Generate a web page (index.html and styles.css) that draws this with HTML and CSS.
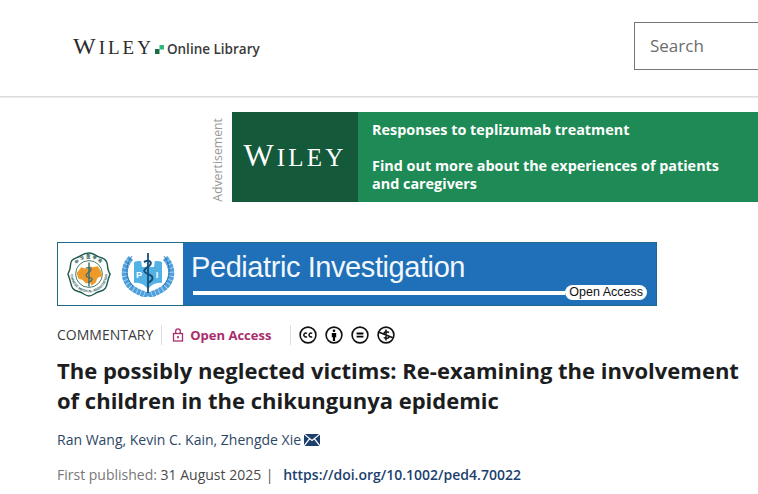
FILE: index.html
```html
<!DOCTYPE html>
<html lang="en">
<head>
    <meta charset="UTF-8">
    <title>The possibly neglected victims - Wiley Online Library</title>
    <link rel="stylesheet" href="styles.css">
</head>
<body>
    <header class="site-header">
        <div class="logo">
            <span class="logo-wiley"><span class="logo-cap">W</span>ILEY</span>
            <svg class="logo-mark" width="9" height="9" viewBox="0 0 9 9"><rect x="0" y="4" width="4.5" height="5" fill="#1a6b45"/><rect x="4.5" y="0" width="4.5" height="4.5" fill="#2fb67a"/></svg>
            <span class="logo-text">Online Library</span>
        </div>
        <div class="search">Search</div>
    </header>

    <div class="ad-row">
        <div class="ad-label"><span>Advertisement</span></div>
        <div class="ad">
            <div class="ad-logo"><span class="ad-cap">W</span>ILEY</div>
            <div class="ad-text">
                <p>Responses to teplizumab treatment</p>
                <p>Find out more about the experiences of patients and caregivers</p>
            </div>
        </div>
    </div>

    <main class="article">
        <div class="banner">
            <div class="banner-logos">
                <svg width="44" height="46" viewBox="0 0 46 46">
                    <path id="ring-top" d="M6.500 23a16.500 16.500 0 0 1 33 0" fill="none"/>
                    <path id="ring-bottom" d="M3.800 23a19.200 19.200 0 0 0 38.400 0" fill="none"/>
                    <path d="M23 1c4 0 6 2 9 3.500s7 1.500 9 5 1 6 2 9 2 4.500 2 4.500-1 3-2 6-1 6-3 9-6 3-9 4.500-5 3.500-8 3.500-5-2-8-3.500-7-1.500-9-4.500-2-6-3-9-2-6-2-6 1-2 2-5 0-6.500 2-9 6-3 9-5S19 1 23 1z" fill="#fff" stroke="#1f5a50" stroke-width="1.500"/>
                    <circle cx="23" cy="23" r="14" fill="#fffdf6" stroke="#2a6a5e" stroke-width=".9"/>
                    <path d="M10 22l5-6 6 2 2-3 4 1 5-1 3 4 2 6-5 2-2 5-4 3-2-3-4 1-4-4-4-1z" fill="#ee9a2b"/>
                    <path d="M23 11v25" fill="none" stroke="#3a6f73" stroke-width="1.500"/>
                    <path d="M19.500 17c5-2 8 1 3.500 4s-4 5 1 6 1 4-2 5" fill="none" stroke="#3a6f73" stroke-width="1.300"/>
                    <text class="ring-cjk"><textPath href="#ring-top" startOffset="50%">中华医学会</textPath></text>
                    <text class="ring-text"><textPath href="#ring-bottom" startOffset="50%">CHINESE MEDICAL ASSOCIATION</textPath></text>
                </svg>
                <svg width="54" height="46" viewBox="0 0 54 46">
                    <path d="M10 7C2 15 1 29 11 37c5 4 10 5 16 8" fill="none" stroke="#4e9fdc" stroke-width="6" stroke-dasharray="3.500 .5"/>
                    <path d="M44 7c8 8 9 22-1 30-5 4-10 5-16 8" fill="none" stroke="#4e9fdc" stroke-width="6" stroke-dasharray="3.500 .5"/>
                    <path d="M11 5C4 14 4 27 12 35M43 5c7 9 7 22-1 30" fill="none" stroke="#1f6aa8" stroke-width=".8"/>
                    <path d="M13 11c5-2 10-1 14 3 4-4 9-5 14-3v21c-5-1-10 1-14 6-4-5-9-7-14-6z" fill="#52b2e6"/>
                    <path d="M20 9l7 5 7-5-1 7H21z" fill="#fff"/>
                    <path d="M27 2v40" fill="none" stroke="#174f7a" stroke-width="1.800"/>
                    <path d="M23 11c6-3 9 1 5 4s-8 5-1 8 5 6 0 9" fill="none" stroke="#174f7a" stroke-width="2"/>
                    <text class="book-letter" x="18" y="27">P</text>
                    <text class="book-letter" x="36" y="27">I</text>
                </svg>
            </div>
            <div class="banner-main">
                <div class="banner-title">Pediatric Investigation</div>
                <div class="banner-rule">
                    <span class="banner-line"></span>
                    <span class="banner-pill">Open Access</span>
                </div>
            </div>
        </div>

        <div class="meta">
            <span class="meta-type">COMMENTARY</span>
            <span class="meta-access">
                <svg width="12" height="14" viewBox="0 0 12 14"><rect x="1.500" y="5.500" width="9" height="7.500" fill="none" stroke="#a92d6c" stroke-width="1.300"/><path d="M3.700 5.500V3.200a2.300 2.300 0 0 1 4.600 0v2.300" fill="none" stroke="#a92d6c" stroke-width="1.300"/><rect x="5.200" y="8" width="1.600" height="2.400" fill="#a92d6c"/></svg>
                Open Access
            </span>
            <span class="meta-cc">
                <svg width="18" height="18" viewBox="0 0 18 18"><circle cx="9" cy="9" r="7.900" class="cc-ring"/><path d="M8 7.400a2 2 0 1 0 0 3.200M13.200 7.400a2 2 0 1 0 0 3.200" class="cc-line"/></svg>
                <svg width="18" height="18" viewBox="0 0 18 18"><circle cx="9" cy="9" r="7.900" class="cc-ring"/><circle cx="9" cy="4.800" r="1.300"/><path d="M6.800 7h4.400v4.200h-1.100V15H7.900v-3.800H6.800z"/></svg>
                <svg width="18" height="18" viewBox="0 0 18 18"><circle cx="9" cy="9" r="7.900" class="cc-ring"/><path d="M5.600 6.600h6.800v1.800H5.600zM5.600 9.800h6.800v1.800H5.600z"/></svg>
                <svg width="18" height="18" viewBox="0 0 18 18"><circle cx="9" cy="9" r="7.900" class="cc-ring"/><path d="M2.200 6.200l13.600 5.600M12 6.600c-1.600-1.400-5-1.200-5 .9 0 2.300 5 1 5 3.200 0 2-3.500 2.200-5.200.8M9 3.500v11" class="cc-line"/></svg>
            </span>
        </div>

        <h1 class="title">The possibly neglected victims: Re-examining the involvement of children in the chikungunya epidemic</h1>

        <div class="authors">
            Ran Wang, Kevin C. Kain, Zhengde Xie
            <svg width="16" height="12" viewBox="0 0 17 12" preserveAspectRatio="none"><rect width="17" height="12" fill="#1c3f6e"/><path d="M0 0l8.500 6.500L17 0M0 12l6.200-7.500M17 12l-6.200-7.500" fill="none" stroke="#fff" stroke-width="1.200"/></svg>
        </div>

        <div class="published">
            First published: <span class="published-date">31 August 2025</span>
            <span class="published-sep">|</span>
            <a class="doi">https://doi.org/10.1002/ped4.70022</a>
        </div>
    </main>
</body>
</html>
```

FILE: styles.css
```css
* {
    box-sizing: border-box;
    margin: 0;
    padding: 0;
}

html, body {
    width: 758px;
    height: 494px;
    overflow: hidden;
}

body {
    background: #fff;
    font-family: 'Open Sans', sans-serif;
    color: #1c1d1e;
}

.site-header {
    height: 97px;
    border-bottom: 1px solid #dcdcdc;
    box-shadow: 0 1px 1px #eee;
    display: flex;
    align-items: flex-start;
    justify-content: space-between;
    padding: 22px 0 0 73px;
}

.logo {
    display: flex;
    align-items: baseline;
    margin-top: 11px;
}

.logo-wiley {
    font-family: 'Liberation Serif', serif;
    font-size: 19px;
    letter-spacing: 3px;
    color: #2b2b2b;
}

.logo-cap {
    font-size: 24px;
}

.logo-mark {
    margin: 0 3px 0 1px;
}

.logo-text {
    font-family: 'Open Sans', sans-serif;
    font-size: 13.500px;
    font-weight: 600;
    color: #3a3a3a;
}

.search {
    width: 130px;
    margin-right: -6px;
    height: 48px;
    border: 1px solid #767676;
    padding: 0 15px;
    font-size: 17px;
    line-height: 45px;
    color: #6c6c6c;
}

.ad-row {
    display: flex;
    height: 90px;
    margin: 15px 0 0 209px;
}

.ad-label {
    width: 23px;
    display: flex;
    align-items: flex-end;
}

.ad-label span {
    writing-mode: vertical-rl;
    transform: rotate(180deg);
    font-size: 12.300px;
    color: #999;
}

.ad {
    display: flex;
    width: 526px;
    background: #1e8a55;
}

.ad-logo {
    width: 126px;
    background: #14593a;
    color: #fff;
    font-family: 'Liberation Serif', serif;
    font-size: 25px;
    letter-spacing: 3.200px;
    text-align: center;
    line-height: 86px;
}

.ad-cap {
    font-size: 32px;
}

.ad-text {
    flex: 1;
    padding: 9px 30px 0 14px;
    color: #fff;
    font-size: 14.400px;
    font-weight: 700;
    line-height: 18px;
}

.ad-text p + p {
    margin-top: 18px;
}

.article {
    padding: 40px 0 0 57px;
}

.banner {
    display: flex;
    width: 600px;
    height: 64px;
    background: #1f6fb9;
    border: 1px solid #1d6a8a;
}

.banner-logos {
    width: 125px;
    background: #fff;
    display: flex;
    align-items: center;
    gap: 10px;
    padding-left: 9px;
}

.ring-cjk {
    font-family: 'Noto Sans CJK SC', sans-serif;
    font-size: 4.500px;
    font-weight: 700;
    letter-spacing: 1.500px;
    text-anchor: middle;
    fill: #1f5a50;
}

.ring-text {
    font-family: 'Liberation Sans', sans-serif;
    font-size: 3.600px;
    font-weight: 700;
    text-anchor: middle;
    fill: #1f5a50;
}

.book-letter {
    font-family: 'Liberation Sans', sans-serif;
    font-size: 9px;
    font-weight: 700;
    text-anchor: middle;
    fill: #fff;
}

.banner-main {
    flex: 1;
    padding: 6px 9px 0 8px;
}

.banner-title {
    font-family: 'Liberation Sans', sans-serif;
    font-size: 29px;
    letter-spacing: -0.420px;
    line-height: 36px;
    color: #f2f7fb;
}

.banner-rule {
    display: flex;
    align-items: center;
    margin-left: 2px;
}

.banner-line {
    flex: 1;
    height: 4px;
    background: #fff;
}

.banner-pill {
    background: #fff;
    border-radius: 8px;
    padding: 0 4px;
    font-family: 'Liberation Sans', sans-serif;
    font-size: 12.500px;
    line-height: 15px;
    color: #111;
}

.meta {
    display: flex;
    align-items: center;
    height: 20px;
    margin-top: 19px;
    font-size: 14px;
}

.meta-type {
    color: #3c3c3c;
    padding-right: 8px;
    border-right: 1px solid #ddd;
    line-height: 20px;
}

.meta-access {
    display: flex;
    align-items: center;
    gap: 6px;
    padding: 0 19px 0 10px;
    border-right: 1px solid #ddd;
    line-height: 20px;
    font-size: 13px;
    font-weight: 700;
    color: #a92d6c;
}

.meta-cc {
    display: flex;
    gap: 8px;
    padding-left: 8px;
}

.cc-ring {
    fill: none;
    stroke: #111;
    stroke-width: 1.600;
}

.cc-line {
    fill: none;
    stroke: #111;
    stroke-width: 1.500;
}

.title {
    margin-top: 10px;
    width: 690px;
    font-size: 22px;
    font-weight: 700;
    line-height: 30px;
    color: #1c1d1e;
}

.authors {
    display: flex;
    align-items: center;
    gap: 3px;
    margin-top: 15px;
    font-size: 14px;
    line-height: 20px;
    color: #2c4766;
}

.published {
    margin-top: 15px;
    font-size: 14px;
    line-height: 20px;
    color: #777;
}

.published-date {
    color: #4a4a4a;
}

.published-sep {
    margin: 0 6px 0 1px;
    color: #555;
}

.doi {
    font-weight: 600;
    color: #1c3f6e;
}
```
